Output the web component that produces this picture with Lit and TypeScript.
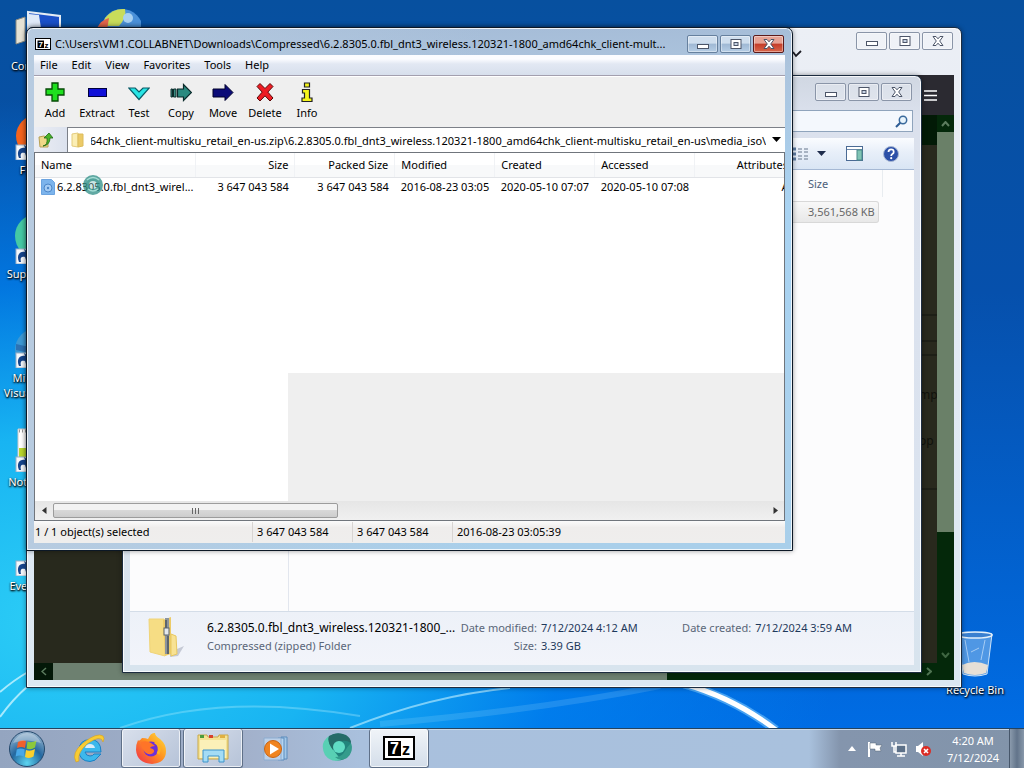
import { LitElement, html, svg, css } from "lit";
import { customElement } from "lit/decorators.js";

const FOLDER = "C:\\Users\\VM1.COLLABNET\\Downloads\\Compressed\\";
const BUILD = "6.2.8305.0.fbl_dnt3_wireless.120321-1800_amd64chk_client-multisku_retail_en-us";
const PATH = `${FOLDER}${BUILD}.zip\\${BUILD}\\media_iso\\`;
const TITLE = `${FOLDER}6.2.8305.0.fbl_dnt3_wireless.120321-1800_amd64chk_client-mult...`;

const MENUS = ["File", "Edit", "View", "Favorites", "Tools", "Help"];

const TOOLS = [
  { name: "Add", art: svg`<path d="M8 1h6v6h6v6h-6v6H8v-6H2V7h6z" fill="#1fe01f" stroke="#064a06" stroke-width="1.3"/>` },
  { name: "Extract", art: svg`<rect x="2.500" y="6.500" width="18" height="8" fill="#1010d8" stroke="#00003c"/>` },
  { name: "Test", art: svg`<path d="M.7 6h6.500l3.800 4 4-4h6.300L11 17.500z" fill="#28e4e4" stroke="#0a5a66" stroke-width="1.200"/>` },
  { name: "Copy", art: svg`<path d="M1 7h1.500v8H1zM3.500 7H6v8H3.500z" fill="#3a8a80" stroke="#0b2b2b"/><path d="M7.500 7h6V2.500l8 8-8 8V15h-6z" fill="#2a8a80" stroke="#0b2b2b" stroke-width="1.200"/>` },
  { name: "Move", art: svg`<path d="M1 7h12V2.500l8 8-8 8V15H1z" fill="#0c0c78" stroke="#00002a"/>` },
  { name: "Delete", art: svg`<path d="M3 4.500 6 1.500l5 5 5-5 3 3-5.200 5.600L19 16l-3 3-5-5.200L6 19l-3-3 5.200-5.900z" fill="#ee1c24" stroke="#5a0808"/>` },
  { name: "Info", art: svg`<path d="M8.500 1h5v4h-5zM6.500 7.500h7v8.500h2.500v3.500H6V16h2.500v-5h-2z" fill="#f4f41c" stroke="#222" stroke-width="1.200"/>` },
];

const COLUMNS = [
  { label: "Name", num: false },
  { label: "Size", num: true },
  { label: "Packed Size", num: true },
  { label: "Modified", num: false },
  { label: "Created", num: false },
  { label: "Accessed", num: false },
  { label: "Attributes", num: true },
];

const shortcutBadge = svg`<rect x="3" y="33" width="15" height="15" fill="#f4f8fc" stroke="#9ab0c8"/><path d="M6 46c-3-7 1-11 6-10l-1-3 7 5-5 6-1-3c-4-1-5 1-4 5z" fill="#16458c"/>`;

const DESKTOP = [
  { label: "Computer", art: svg`<path d="M3 12l9-3v24l-9 3z" fill="#e6e2d4" stroke="#8a8a80"/><path d="M15 4l32 4v22l-32-3z" fill="#1a50c8" stroke="#e4ecf4" stroke-width="2"/><path d="M16 6l10 1 3 20-13-1z" fill="#dfe9f8"/>` },
  { label: "Firefox", art: svg`<circle cx="24" cy="24" r="21" fill="#f4641e"/><circle cx="25" cy="25" r="12" fill="#7a2ad0"/>${shortcutBadge}` },
  { label: "Supermium", art: svg`<circle cx="24" cy="20" r="22" fill="#45c9a4"/><circle cx="26" cy="20" r="9" fill="#1d7c6c"/>${shortcutBadge}` },
  { label: "Microsoft Visual Studio", art: svg`<circle cx="24" cy="30" r="22" fill="#3c98d4"/><path d="M3 24q20 6 40 0v6q-20 6-40 0z" fill="#2c72b4"/>${shortcutBadge}` },
  { label: "Notepad++", art: svg`<path d="M5 5h36v40H5z" fill="#fff" stroke="#c8c8c8"/><path d="M6 24h34v10H6z" fill="#b8d62c"/><path d="M6 7h34" stroke="#999" stroke-width="3" stroke-dasharray="1 2"/>${shortcutBadge}` },
  { label: "Everything", art: svg`${shortcutBadge}` },
];

const sevenZip = (size: number) => html`<svg width="${size * 4 / 3}" height="${size}" viewBox="0 0 32 24" role="img" aria-label="7-Zip">
  <rect x="1" y="1" width="30" height="22" fill="#fff" stroke="#000" stroke-width="2"/>
  <rect x="5" y="5" width="13" height="15" fill="#000"/>
  <text x="7" y="18" font-family="Liberation Sans, sans-serif" font-weight="700" font-size="16" fill="#fff">7</text>
  <text x="19" y="19" font-family="Liberation Sans, sans-serif" font-weight="700" font-size="16" fill="#000">z</text>
</svg>`;

const captionButtons = (active: boolean) => html`<div class="caption ${active ? "active" : ""}">
  <button aria-label="Minimize"><svg width="12" height="12" viewBox="0 0 12 12"><rect x=".5" y="6.500" width="11" height="4" fill="#fff" stroke="#4c5568"/></svg></button>
  <button aria-label="Maximize"><svg width="12" height="12" viewBox="0 0 12 12"><rect x="1" y="1.500" width="10" height="9" fill="#fff" stroke="#4c5568"/><rect x="4" y="4.500" width="4" height="3" fill="#c8d4e4" stroke="#4c5568"/></svg></button>
  <button class="close" aria-label="Close"><svg width="12" height="12" viewBox="0 0 12 12"><path d="M1 1.500h3l2 2.300 2-2.300h3L7.700 6l3.300 4.500H8L6 8.200 4 10.500H1L4.300 6z" fill="#fff" stroke="#4c5568"/></svg></button>
</div>`;

@customElement("app-root")
export class AppRoot extends LitElement {
  static styles = css`
    :host { display: flex; flex-direction: column; height: 100vh; overflow: hidden; font: 11px/16px "Noto Sans", "Open Sans", sans-serif; color: #000; }
    *, *::before, *::after { box-sizing: border-box; }
    button, input { font: inherit; color: inherit; margin: 0; padding: 0; border: 0; background: none; }
    button { display: flex; align-items: center; justify-content: center; }
    svg { display: block; flex: none; }
    table { border-collapse: collapse; table-layout: fixed; }
    th, td { font-weight: 400; text-align: left; padding: 0 6px; white-space: nowrap; overflow: hidden; }
    .num { text-align: right; }

    .desktop { position: relative; flex: 1; min-height: 0; overflow: hidden;
      background: radial-gradient(ellipse 780px 520px at 60px 620px, #2ccdf6 0, #18b4f2 35%, rgba(0, 130, 240, .75) 65%, rgba(0, 100, 220, 0) 100%), linear-gradient(#07509f 0, #0650ac 40%, #006ce4 100%); }
    .rays { position: absolute; inset: auto 0 0 0; width: 100%; height: 208px; }
    .icons { position: absolute; top: 0; left: 0; display: grid; grid-auto-rows: 104px; width: 74px; }
    .shortcut { display: flex; flex-direction: column; align-items: center; padding-top: 8px; gap: 2px; color: #fff; text-align: center; text-decoration: none; text-shadow: 0 1px 2px #000, 1px 1px 2px #000; line-height: 15px; }
    .ball { position: absolute; left: 97px; top: 8px; }
    .bin { position: absolute; right: 12px; bottom: 31px; width: 74px; padding: 0; gap: 4px; }

    .window { position: absolute; display: flex; flex-direction: column; border: 1px solid #1c2c40; border-radius: 7px 7px 0 0; box-shadow: inset 0 0 0 1px rgba(255, 255, 255, .8), 0 0 5px rgba(0, 0, 0, .4); padding: 0 7px 7px; }
    .caption { display: flex; gap: 2px; }
    .caption button { width: 31px; height: 18px; border: 1px solid #8a95a8; border-radius: 2px; background: rgba(255, 255, 255, .2); box-shadow: inset 0 0 0 1px rgba(255, 255, 255, .4); }
    .caption.active button { border-color: #66809e; background: linear-gradient(#cfdeee 45%, #9fb8d4 50%, #b6cee6); }
    .caption.active .close { border-color: #5c1a1a; background: linear-gradient(#e6a294 45%, #c43c28 50%, #d8684c); }

    .browser { inset: 27px 62px 40px 26px; background: linear-gradient(#eceff5, #e4ebf5 30%, #dce8f2); }
    .browser-top { display: flex; justify-content: flex-end; height: 47px; padding: 4px 1px 0 0; }
    .browser-top .chevron { margin: 18px 54px 0 0; }
    .nav { display: flex; align-items: center; justify-content: flex-end; height: 40px; padding-right: 17px; background: #2b2a31; color: #fff; }
    .page { flex: 1; display: grid; grid-template: 1fr 17px / 1fr 17px; min-height: 0; background: #04280a; }
    .doc { background: linear-gradient(#021a06 30px, #28291d 30px); display: flex; flex-direction: column; align-items: flex-end; overflow: hidden; color: #10120c; line-height: 18px; padding-top: 199px; }
    .cell { width: 40px; border-top: 2px solid #1d1f16; }
    .cell.short { height: 26px; }
    .cell.thin { height: 14px; }
    .cell.tall { height: 134px; padding: 30px 0 0 22px; display: grid; align-content: start; gap: 28px; font-size: 12px; }
    .vbar { display: flex; flex-direction: column; }
    .vbar button, .hbar button { width: 17px; height: 17px; flex: none; }
    .vthumb { flex: 0 0 73%; background: #6a8068; }
    .vbar button:last-child { margin-top: auto; }
    .hbar { display: flex; }
    .hbar button:first-child { width: 19px; background: #041808; }
    .hthumb { flex: 0 0 68%; background: #6d8070; }
    .hbar button:last-child { margin-left: auto; }

    .explorer { inset: 75px 102px 55px 122px; background: linear-gradient(#d0d7e2 0, #dbe1ed 40px, #dbe3ef 70%, #d8e4ee); }
    .explorer-top { display: flex; justify-content: flex-end; height: 34px; padding: 7px 2px 0 0; }
    .search { display: flex; align-items: center; align-self: flex-end; width: 220px; height: 22px; margin: 0 1px 6px 0; padding-right: 4px; border: 1px solid #8fa4bc; background: #f4f8fd; }
    .search input { flex: 1; min-width: 0; }
    .commands { display: flex; align-items: center; justify-content: flex-end; height: 32px; padding-right: 15px; border-bottom: 1px solid #a5b8d4; background: linear-gradient(#fafcff, #e8eff9 45%, #d9e5f4); }
    .commands button:nth-child(2) { margin: 0 20px 0 8px; }
    .commands button:nth-child(3) { margin-right: 20px; }
    .files { flex: 1; display: flex; min-height: 0; background: #fcfcfd; color: #686868; }
    .tree { width: 159px; border-right: 1px solid #e2e6ee; }
    .files-list { flex: 1; padding-right: 31px; }
    .files-list table { width: 100%; border-collapse: separate; border-spacing: 0; }
    .files-list th { height: 27px; padding-right: 0; color: #4c607a; }
    .files-list th:last-child { border-right: 1px solid #e8ecf0; }
    .files-list td { height: 22px; padding-right: 4px; background: linear-gradient(#f8f8f8, #e8e8e8); border: solid #d8d8d8; border-width: 1px 0; }
    .files-list .gap { height: 4px; background: none; border: 0; }
    .files-list .blank { background: none; border: 0; padding: 0; }
    .files-list .num { border-right-width: 1px; border-radius: 0 3px 3px 0; }
    .c-size { width: 77px; }
    .c-tail { width: 4px; }
    .details { display: flex; align-items: flex-start; height: 54px; padding: 4px 16px 0; border-top: 1px solid #d4dde8; background: linear-gradient(#edf1f8, #f2f4fa); color: #5a6678; line-height: 18px; }
    .details .file { width: 248px; margin-left: 21px; white-space: nowrap; padding-top: 3px; }
    .details strong { display: block; font-weight: 400; font-size: 12px; color: #000; }
    .details dl { display: grid; grid-template-columns: 82px auto; column-gap: 4px; margin: 0; padding-top: 3px; white-space: nowrap; }
    .details dl.made { margin-left: auto; margin-right: 46px; grid-template-columns: auto auto; }
    .details dt { text-align: right; }
    .details dd { margin: 0; color: #1e395b; }

    .archive { inset: 27px 231px 177px 26px; border-color: #0c1826; background: linear-gradient(90deg, #b7cbe0, rgba(183, 203, 224, 0) 60%), linear-gradient(#a6bdd8 0, #acc4dd 40px, #a9d3f2 180px, #a9cfea); }
    .archive-top { display: flex; align-items: center; height: 27px; padding: 5px 1px 0 1px; gap: 4px; }
    .archive-top h1 { flex: 1; margin: 0; font: inherit; white-space: nowrap; overflow: hidden; }
    .menus { display: flex; align-items: center; height: 21px; gap: 14px; padding: 0 6px; border-bottom: 1px solid #a39fae; background: linear-gradient(#fbfcff 20%, #e2e8f3 45%, #d7dfec); }
    .tools { display: flex; height: 51px; border-top: 1px solid #fff; background: #efefef; }
    .tools button { flex-direction: column; width: 42px; gap: 2px; justify-content: flex-start; padding-top: 5px; white-space: nowrap; }
    .address { display: flex; height: 25px; background: #eff1f6; }
    .address .up { width: 33px; padding-right: 10px; background: linear-gradient(90deg, #eceef4, #dce2ee); }
    .combo { flex: 1; display: flex; align-items: center; gap: 6px; padding: 0 4px 0 3px; border: 1px solid #7c8088; border-width: 1px 0 0 1px; background: #fff; min-width: 0; }
    .combo input { flex: 1; min-width: 0; height: 20px; outline: 0; }
    .listing { flex: 1; display: flex; flex-direction: column; min-height: 0; border: 1px solid #70757c; background: #fff; overflow: hidden; }
    .scroller { position: relative; flex: 1; overflow: hidden; }
    .scroller table { position: relative; width: 760px; }
    .c-name { width: 160px; }
    .scroller th { height: 24px; background: linear-gradient(#fff 50%, #f8f9fa 50%); border-bottom: 1px solid #e2e4e8; border-right: 1px solid #f0f2f5; }
    .scroller td { height: 20px; }
    .scroller td:first-child { padding-right: 0; }
    .entry { display: flex; align-items: center; gap: 2px; }
    .unpainted { position: absolute; inset: 220px 0 0 253px; background: #efefef; }
    .cursor { position: absolute; left: 47px; top: 21px; }
    .scroll { display: flex; align-items: center; height: 19px; background: linear-gradient(#e6e6e6, #f0f0f0); }
    .scroll button { width: 18px; height: 17px; flex: none; }
    .scroll button:last-child { margin-left: auto; }
    .scroll .thumb { flex: 0 0 285px; height: 15px; border: 1px solid #9c9c9c; border-radius: 2px; background: linear-gradient(#f2f2f2 45%, #d8d8d8 50%, #cdcdcd); }
    .status { display: flex; align-items: center; height: 22px; background: linear-gradient(#fbfbfb, #efedec 30%, #efeeed); white-space: nowrap; }
    .status span { width: 100px; padding-left: 4px; line-height: 20px; border-left: 1px solid #d8d4d2; }
    .status span:first-child { width: 218px; padding-left: 1px; border: 0; }
    .status span:last-child { flex: 1; }

    .taskbar { display: flex; align-items: stretch; height: 40px; border-top: 1px solid #24435f; box-shadow: inset 0 1px 0 #c8d8e8; background: linear-gradient(90deg, #94a5c0 0, #a2b0ca 240px, #a9c0dd 360px, #a9c1dd 79%, #8495ad 82%, #8294aa); }
    .taskbar > button { width: 60px; margin-right: 2px; border-radius: 3px; }
    .taskbar > .start { width: 54px; margin-right: 5px; }
    .taskbar > .open { border: 1px solid #5f7088; border-top: 0; background: linear-gradient(135deg, #d9e0ec, #b6c3d8); box-shadow: inset 0 0 0 1px rgba(255, 255, 255, .7); }
    .taskbar > .open.front { background: linear-gradient(#f0f4f8, #d4deea); }
    .tray { display: flex; align-items: center; gap: 8px; margin-left: auto; color: #fff; }
    .tray time { width: 68px; text-align: center; line-height: 17px; }
    .tray .more { margin-right: 3px; }
    .peek { width: 15px; align-self: stretch; margin-left: -6px; border-left: 1px solid #46566a; background: linear-gradient(90deg, #8a9aac, #62748a 50%, #8898aa); }
  `;

  firstUpdated() {
    const box = this.renderRoot.querySelector<HTMLInputElement>("#path")!;
    box.scrollLeft = box.scrollWidth;
  }

  private renderDesktop() {
    return html`
      <svg class="rays" viewBox="0 0 1024 208" preserveAspectRatio="none" aria-hidden="true">
        <g fill="none" stroke="#c8f4ff">
          <path d="M0 172Q14 160 28 152" stroke-width="2" opacity=".8"/>
          <path d="M0 197Q12 180 28 166" stroke-width="2" opacity=".8"/>
          <path d="M120 208Q220 172 360 196" stroke-width="2" opacity=".3"/>
          <path d="M350 208Q430 176 510 168" stroke-width="2" opacity=".6"/>
          <path d="M380 204Q540 190 660 166" stroke-width="6" opacity=".15"/>
          <path d="M684 164Q734 178 776 210" stroke="#8cd4ff" stroke-width="9" opacity=".5"/>
          <path d="M684 164Q734 178 776 210" stroke="#fff" stroke-width="5"/>
        </g>
      </svg>
      <svg class="ball" width="44" height="44" viewBox="0 0 44 44" aria-hidden="true"><circle cx="25" cy="22" r="21" fill="#4a90d8"/><path d="M8 10Q16 0 28 1q2 8-6 17H6z" fill="#c8dc5a"/><path d="M0 20q4-8 12-10l-2 12z" fill="#e0644a"/><circle cx="31" cy="10" r="5" fill="#a8d0f0"/></svg>
      <nav class="icons">
        ${DESKTOP.map((d) => html`<a class="shortcut" href="#"><svg width="48" height="48" viewBox="0 0 48 48" aria-hidden="true">${d.art}</svg>${d.label}</a>`)}
      </nav>
      <a class="shortcut bin" href="#">
        <svg width="42" height="48" viewBox="0 0 42 48" aria-hidden="true"><path d="M4 4h34l-5 40q-12 4-24 0z" fill="#8fc0ec" fill-opacity=".55" stroke="#cfe4f8"/><ellipse cx="21" cy="5" rx="17" ry="3" fill="#3a80d0" stroke="#e4f0fa" stroke-width="1.500"/><path d="M8 35q12-6 26 0l-2 8q-11 4-22 0z" fill="#e6dfd6"/><path d="M11 10l4 22M31 10l-4 20M17 22l8-4" stroke="#e0f0ff" opacity=".6"/></svg>
        Recycle Bin
      </a>`;
  }

  private renderBrowser() {
    return html`<section class="window browser" aria-label="Browser">
      <div class="browser-top">
        <svg class="chevron" width="10" height="8" viewBox="0 0 10 8"><path d="M1 2l3 4 5-5" fill="none" stroke="#1c1c24" stroke-width="1.800"/></svg>
        ${captionButtons(false)}
      </div>
      <div class="nav"><button aria-label="Menu"><svg width="13" height="11" viewBox="0 0 13 11"><path d="M0 1h13M0 5.500h13M0 10h13" stroke="currentColor" stroke-width="1.500"/></svg></button></div>
      <div class="page">
        <div class="doc">
          <div class="cell short"></div><div class="cell thin"></div>
          <div class="cell tall"><span>mp</span><span>op</span></div><div class="cell"></div>
        </div>
        <div class="vbar">
          <button aria-label="Scroll up"><svg width="9" height="6" viewBox="0 0 9 6"><path d="M1 5l3.500-4L8 5" fill="none" stroke="#5c7c5e" stroke-width="2"/></svg></button>
          <div class="vthumb"></div>
          <button aria-label="Scroll down"><svg width="9" height="6" viewBox="0 0 9 6"><path d="M1 1l3.500 4L8 1" fill="none" stroke="#3f6642" stroke-width="2"/></svg></button>
        </div>
        <div class="hbar">
          <button aria-label="Scroll left"><svg width="6" height="9" viewBox="0 0 6 9"><path d="M5 1L1 4.500 5 8" fill="none" stroke="#5c7c5e" stroke-width="1.500"/></svg></button>
          <div class="hthumb"></div>
          <button aria-label="Scroll right"><svg width="6" height="9" viewBox="0 0 6 9"><path d="M1 1l4 3.500L1 8" fill="none" stroke="#4f7452" stroke-width="2"/></svg></button>
        </div>
      </div>
    </section>`;
  }

  private renderExplorer() {
    return html`<section class="window explorer" aria-label="Explorer">
      <div class="explorer-top">${captionButtons(false)}</div>
      <label class="search"><input type="search" aria-label="Search" />
        <svg width="13" height="13" viewBox="0 0 13 13"><circle cx="8" cy="5" r="3.700" fill="#e8f4fc" stroke="#3a6a9c" stroke-width="1.500"/><path d="M5.300 7.700L1 12" stroke="#2c5c94" stroke-width="2"/></svg>
      </label>
      <div class="commands">
        <button aria-label="View"><svg width="18" height="14" viewBox="0 0 18 14"><path d="M1 2h4M1 7h4M1 12h4" stroke="#5c7aa0" stroke-width="3"/><path d="M7 2h4M13 2h4M7 5h4M13 5h4M7 9h4M13 9h4M7 12h4M13 12h4" stroke="#66768c"/></svg></button>
        <button aria-label="View options"><svg width="9" height="6" viewBox="0 0 9 6"><path d="M0 0h9L4.500 5z" fill="#1e2c4c"/></svg></button>
        <button aria-label="Preview pane"><svg width="17" height="15" viewBox="0 0 17 15"><rect x=".5" y=".5" width="16" height="14" fill="#fff" stroke="#4a6a94"/><path d="M1 3.500h15" stroke="#6c88ac"/><rect x="11" y="4" width="5" height="10" fill="#80c4b4" stroke="#4a8a8a"/></svg></button>
        <button aria-label="Help"><svg width="16" height="16" viewBox="0 0 16 16"><circle cx="8" cy="8" r="7.500" fill="#2c50a8" stroke="#a8b8d4"/><path d="M5.500 6q0-2.700 2.600-2.700T10.700 6q0 1.300-1.400 2Q8.200 8.600 8.200 10" fill="none" stroke="#fff" stroke-width="1.800"/><circle cx="8.200" cy="12.200" r="1.100" fill="#fff"/></svg></button>
      </div>
      <div class="files">
        <div class="tree"></div>
        <div class="files-list">
          <table>
            <colgroup><col /><col class="c-size" /><col class="c-tail" /></colgroup>
            <thead><tr><th></th><th colspan="2">Size</th></tr></thead>
            <tbody><tr><td class="gap" colspan="3"></td></tr><tr><td></td><td class="num">3,561,568 KB</td><td class="blank"></td></tr></tbody>
          </table>
        </div>
      </div>
      <div class="details">
        <svg width="40" height="42" viewBox="0 0 40 42" aria-hidden="true"><path d="M24 36l14-6-6 10-8 1z" fill="#a8aebc" opacity=".6"/><path d="M3 3h15l1 37-15-4z" fill="#f6dd84" stroke="#f0d478"/><path d="M17 4l8-3v37l-6 2z" fill="#eccb68"/><path d="M25 18l5 2 1 18-6 2z" fill="#f8e294" stroke="#e8c860"/><path d="M21 2v36" stroke="#8c949c" stroke-width="4"/><path d="M20 4v8M22 20v18" stroke="#4c545c" stroke-width="1.500"/><rect x="18" y="12" width="5" height="7" fill="#e4e8ec" stroke="#5c646c"/></svg>
        <div class="file"><strong>6.2.8305.0.fbl_dnt3_wireless.120321-1800_...</strong>Compressed (zipped) Folder</div>
        <dl><dt>Date modified:</dt><dd>7/12/2024 4:12 AM</dd><dt>Size:</dt><dd>3.39 GB</dd></dl>
        <dl class="made"><dt>Date created:</dt><dd>7/12/2024 3:59 AM</dd></dl>
      </div>
    </section>`;
  }

  private renderArchive() {
    return html`<main class="window archive">
      <header class="archive-top">${sevenZip(12)}<h1>${TITLE}</h1>${captionButtons(true)}</header>
      <nav class="menus">${MENUS.map((m) => html`<button>${m}</button>`)}</nav>
      <div class="tools">${TOOLS.map((t) => html`<button><svg width="22" height="21" viewBox="0 0 22 21" aria-hidden="true">${t.art}</svg>${t.name}</button>`)}</div>
      <div class="address">
        <button class="up" aria-label="Up one level"><svg width="15" height="16" viewBox="0 0 15 16"><path d="M1 5l5-1 4 2v9H2z" fill="#f0d888" stroke="#b8a054"/><path d="M5 14q5-1 4-8H6l5-5 4 5h-3q0 7-7 8z" fill="#4cb428" stroke="#1e6a14" stroke-width=".8"/></svg></button>
        <div class="combo">
          <svg width="14" height="16" viewBox="0 0 14 16" aria-hidden="true"><path d="M1 2l6-1v14l-6-1z" fill="#fbeeb4" stroke="#e4cc7c"/><path d="M7 2h5v12l-5 1z" fill="#ecca68" stroke="#dcbc5c"/></svg>
          <input id="path" type="text" aria-label="Path" .value=${PATH} />
          <button aria-label="Show history"><svg width="9" height="6" viewBox="0 0 9 6"><path d="M0 0h9L4.500 5z" fill="#000"/></svg></button>
        </div>
      </div>
      <div class="listing">
        <div class="scroller">
          <div class="unpainted"></div>
          <table>
            <colgroup><col class="c-name" /><col /><col /><col /><col /><col /><col /></colgroup>
            <thead><tr>${COLUMNS.map((c) => html`<th class=${c.num ? "num" : ""}>${c.label}</th>`)}</tr></thead>
            <tbody><tr>
              <td><div class="entry"><svg width="14" height="16" viewBox="0 0 14 16" aria-hidden="true"><path d="M.5.500h10l3 3v12H.5z" fill="#7cb4ec" stroke="#6ca4e0"/><circle cx="7" cy="9" r="4" fill="#a4ccf4" stroke="#4c86c8"/><circle cx="7" cy="9" r="1.200" fill="#4c86c8"/></svg>6.2.8305.0.fbl_dnt3_wirel...</div></td>
              <td class="num">3 647 043 584</td><td class="num">3 647 043 584</td>
              <td>2016-08-23 03:05</td><td>2020-05-10 07:07</td><td>2020-05-10 07:08</td><td class="num">A</td>
            </tr></tbody>
          </table>
          <svg class="cursor" width="22" height="22" viewBox="0 0 22 22" aria-hidden="true"><circle cx="11" cy="11" r="7" fill="#8cc8c0" fill-opacity=".45" stroke="#2c8c84" stroke-width="6" stroke-opacity=".75"/><path d="M5 6q6-5 12 0M6 15q5 4 10 0" fill="none" stroke="#a4dcd4" stroke-width="1.500"/></svg>
        </div>
        <div class="scroll">
          <button aria-label="Scroll left"><svg width="5" height="7" viewBox="0 0 5 7"><path d="M4.500 0v7L0 3.500z" fill="#333"/></svg></button>
          <button class="thumb" aria-label="Scroll position"><svg width="8" height="6" viewBox="0 0 8 6"><path d="M.5 0v6M3.500 0v6M6.500 0v6" stroke="#666"/></svg></button>
          <button aria-label="Scroll right"><svg width="5" height="7" viewBox="0 0 5 7"><path d="M.5 0v7L5 3.500z" fill="#333"/></svg></button>
        </div>
      </div>
      <footer class="status"><span>1 / 1 object(s) selected</span><span>3 647 043 584</span><span>3 647 043 584</span><span>2016-08-23 03:05:39</span></footer>
    </main>`;
  }

  private renderTaskbar() {
    return html`<footer class="taskbar">
      <button class="start" aria-label="Start"><svg width="38" height="38" viewBox="0 0 38 38">
        <defs><radialGradient id="orb" cx=".5" cy=".9" r=".9"><stop offset="0" stop-color="#5cd4f0"/><stop offset=".5" stop-color="#2468a0"/><stop offset="1" stop-color="#9cb8d0"/></radialGradient></defs>
        <circle cx="19" cy="19" r="17.500" fill="url(#orb)" stroke="#24486c"/>
        <path d="M10 12q4-3 8-1l-1 7q-4-2-8 0z" fill="#f0602c"/><path d="M19.500 11.500q4 2 9-1l-1.500 7q-4 3-8.500 1z" fill="#8cc83c"/><path d="M8.700 19.500q4-2 8 0l-1 7q-4-2-8 0z" fill="#48a8e8"/><path d="M18 20q4 2 9-1l-1.500 7.500q-4 2.500-8.500.5z" fill="#fcd02c"/>
        <path d="M5 13Q10 3 19 3t14 10q-14-5-28 0z" fill="#fff" opacity=".3"/></svg></button>
      <button aria-label="Internet Explorer"><svg width="32" height="32" viewBox="0 0 32 32">
        <path d="M25 24q-2 4-8 4.500Q6 28 6 17.500T17 6.500q11 0 11 12.500H12q1 4 5 4 3 0 4-2h7z" fill="#3cb8ec" stroke="#1c80c4"/><path d="M12 15h10q-1-4-5-4t-5 4z" fill="#dcecf8"/><path d="M3 29Q-2 20 10 10 24-1 30 3q2 2 0 6Q28 1 14 11 4 20 6 28z" fill="#f8cc34" stroke="#d8a01c" stroke-width=".6"/></svg></button>
      <button class="open" aria-label="Firefox"><svg width="32" height="32" viewBox="0 0 32 32">
        <defs><linearGradient id="fox" x1="1" x2="0" y2="1"><stop offset="0" stop-color="#ffe23c"/><stop offset=".45" stop-color="#ff9420"/><stop offset="1" stop-color="#f0284c"/></linearGradient></defs>
        <path d="M3 8q1 2 4-2 4 0 6 1 3-7 7-6 0 3 5 6 6 5 6 12 0 12-14 13Q2 31 1 18 1 12 3 8z" fill="url(#fox)"/><circle cx="16" cy="17" r="7.500" fill="#6c30d8"/><path d="M6 10q6-2 10 1l4 3q-4 0-5 2 5 1 4 4-3 4-8 1-5-4-5-11z" fill="#ff7428"/><path d="M20 10q7 4 3 12" fill="none" stroke="#ffb020" stroke-width="3"/></svg></button>
      <button class="open" aria-label="Windows Explorer"><svg width="36" height="32" viewBox="0 0 36 32">
        <path d="M3 3h9l1 2h10l1-2h9v24H3z" fill="#f4e294" stroke="#c8a848"/><path d="M5 8h26v18H5z" fill="#fbf0b8"/><path d="M5 3h4v3H5z" fill="#4c9c3c"/><path d="M14 3h4v3h-4z" fill="#d8402c"/><path d="M25 3h5v3h-5z" fill="#e0b040"/><path d="M8 30V18h21v12h-5v-6H13v6z" fill="#a4dcf4" stroke="#3c94cc"/></svg></button>
      <button aria-label="Media Player"><svg width="28" height="28" viewBox="0 0 28 28">
        <path d="M20 2h6v22h-6z" fill="#a4c8e8" stroke="#5c8cbc"/><path d="M17 3h6v22h-6z" fill="#b4d4f0" stroke="#5c8cbc"/><path d="M3 3h17v22H3z" fill="#bcd0e8" stroke="#8cacd0"/><circle cx="12" cy="14" r="8.500" fill="#f08420" stroke="#c86414"/><path d="M9 8.500l9 5.500-9 5.500z" fill="#fff"/></svg></button>
      <button aria-label="Supermium"><svg width="34" height="32" viewBox="0 0 34 32">
        <circle cx="18" cy="14" r="13.500" fill="#22847c"/><path d="M5 22Q-1 10 9 3q-2 6 3 12l9 12q-10 3-16-5z" fill="#58d0b4"/><path d="M9 3q8-5 17-1 5 3 5 8-6-4-12-1-5 3-6 8Q7 9 9 3z" fill="#266c68"/><path d="M31 10q3 9-4 15-7 4-12-1 7 0 10-6 2-4 6-8z" fill="#349c8c"/><circle cx="19" cy="14" r="6" fill="#60dcc4"/></svg></button>
      <button class="open front" aria-label="7-Zip">${sevenZip(24)}</button>
      <div class="tray">
        <button class="more" aria-label="Show hidden icons"><svg width="8" height="5" viewBox="0 0 8 5"><path d="M4 0l4 5H0z" fill="#fff"/></svg></button>
        <button aria-label="Action Center"><svg width="16" height="16" viewBox="0 0 16 16"><path d="M2 1v15" stroke="#fff" stroke-width="2"/><path d="M3 2h6v2h6l-2 3 1 3H8V8H3z" fill="#fff" stroke="#566474" stroke-width=".5"/></svg></button>
        <button aria-label="Network"><svg width="16" height="16" viewBox="0 0 16 16"><rect x="5" y="4" width="10" height="8" fill="#5c7088" stroke="#fff" stroke-width="1.500"/><path d="M6 15h8M10 12v3M1 1v4h4V1M3 5v6h2" fill="none" stroke="#fff" stroke-width="1.500"/></svg></button>
        <button aria-label="Volume"><svg width="16" height="16" viewBox="0 0 16 16"><path d="M1 5h2l5-4v14l-5-4H1z" fill="#fff"/><circle cx="11" cy="10" r="5" fill="#dc2c24"/><path d="M9 8l4 4M13 8l-4 4" stroke="#fff" stroke-width="1.600"/></svg></button>
        <time>4:20 AM<br />7/12/2024</time>
        <button class="peek" aria-label="Show desktop"></button>
      </div>
    </footer>`;
  }

  render() {
    return html`<div class="desktop">${this.renderDesktop()}${this.renderBrowser()}${this.renderExplorer()}${this.renderArchive()}</div>${this.renderTaskbar()}`;
  }
}
